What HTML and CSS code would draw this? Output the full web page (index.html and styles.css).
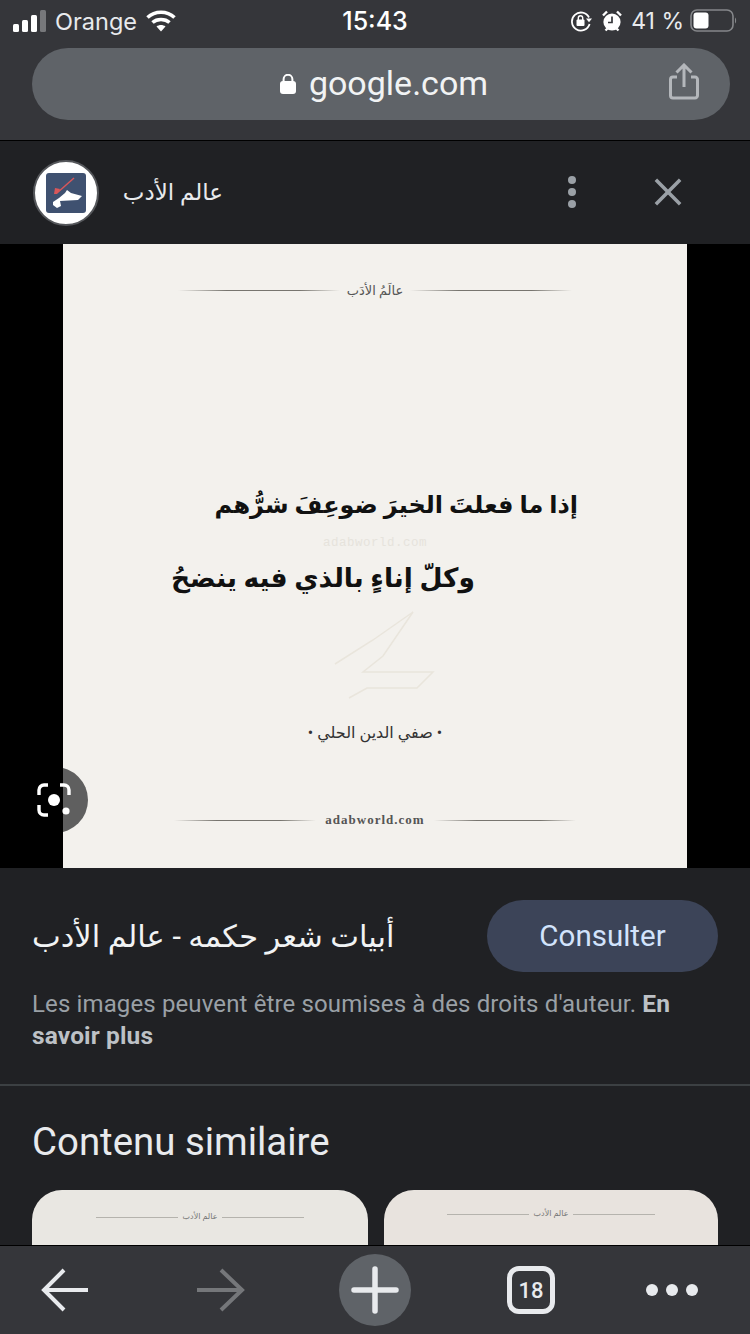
FILE: index.html
```html
<!DOCTYPE html>
<html lang="fr">
<head>
    <meta charset="UTF-8">
    <title>google.com</title>
    <link rel="stylesheet" href="styles.css">
</head>
<body>
<div class="phone">
    <!-- barre du haut -->
    <header class="top">
        <div class="status">
            <div class="status-left">
                <svg class="signal" width="36" height="22" viewBox="0 0 36 22">
                    <rect x="0" y="14" width="6" height="8" rx="1.5" fill="#fff"/>
                    <rect x="9" y="10" width="6" height="12" rx="1.5" fill="#fff"/>
                    <rect x="18" y="5" width="6" height="17" rx="1.5" fill="#fff"/>
                    <rect x="27" y="0" width="6" height="22" rx="1.5" fill="#77787b"/>
                </svg>
                <span class="carrier">Orange</span>
                <svg class="wifi" width="30" height="22" viewBox="0 0 30 22">
                    <path d="M1.5 7.5C9 0.5 21 0.5 28.5 7.5" fill="none" stroke="#fff" stroke-width="3.6"/>
                    <path d="M6.5 12.5C11 8.5 19 8.5 23.5 12.5" fill="none" stroke="#fff" stroke-width="3.6"/>
                    <path d="M10.5 16.5C13 14.5 17 14.5 19.5 16.5L15 21.5Z" fill="#fff"/>
                </svg>
            </div>
            <span class="clock">15:43</span>
            <div class="status-right">
                <svg width="22" height="22" viewBox="0 0 22 22">
                    <path d="M19 7.5A9 9 0 1 0 19.6 14" fill="none" stroke="#fff" stroke-width="1.8"/>
                    <path d="M16 8.5h6l-3 3.8z" fill="#fff"/>
                    <rect x="6.5" y="9.5" width="8" height="6.5" rx="1" fill="#fff"/>
                    <path d="M8.3 10V8a2.2 2.2 0 0 1 4.4 0v2" fill="none" stroke="#fff" stroke-width="1.4"/>
                </svg>
                <svg class="alarm" width="20" height="22" viewBox="0 0 20 22">
                    <circle cx="10" cy="12" r="8.6" fill="#fff"/>
                    <path d="M1 5.5L5 1.5M19 5.5L15 1.5M3.5 20.5l2-2M16.5 20.5l-2-2" stroke="#fff" stroke-width="2.4"/>
                    <path d="M10 6.5V12.5H6" fill="none" stroke="#35363a" stroke-width="1.7"/>
                </svg>
                <span class="battery-text">41 %</span>
                <svg class="battery" width="47" height="24" viewBox="0 0 47 24">
                    <rect x="1" y="1" width="42" height="21" rx="6" fill="none" stroke="#85878a" stroke-width="1.6"/>
                    <rect x="3.5" y="3.5" width="15" height="16" rx="3" fill="#fff"/>
                    <path d="M45 8.5c1.5.8 1.5 5.2 0 6z" fill="#85878a"/>
                </svg>
            </div>
        </div>
        <div class="urlbar">
            <div class="url">
                <svg width="16" height="20" viewBox="0 0 16 20">
                    <rect x="0" y="7" width="16" height="13" rx="3" fill="#fff"/>
                    <path d="M3.6 8V5.2a4.4 4.4 0 0 1 8.8 0V8" fill="none" stroke="#fff" stroke-width="2"/>
                </svg>
                <span>google.com</span>
            </div>
            <svg class="share" width="30" height="37" viewBox="0 0 30 37">
                <path d="M8 14H4a2.500 2.500 0 0 0-2.500 2.500v16A2.500 2.500 0 0 0 4 35h22a2.500 2.500 0 0 0 2.500-2.500v-16A2.500 2.500 0 0 0 26 14h-4" fill="none" stroke="#b4b7bb" stroke-width="3"/>
                <path d="M15 24V3M7.500 9.500L15 2l7.500 7.500" fill="none" stroke="#b4b7bb" stroke-width="3"/>
            </svg>
        </div>
    </header>

    <main class="content">
        <div class="source">
            <div class="logo">
                <svg width="40" height="40" viewBox="0 0 40 40">
                    <rect width="40" height="40" rx="3" fill="#3f5170"/>
                    <path d="M7 29L13 25 19 20 21 17 25 20 36 23 32 27 14 28 15 33 11 35 7 32z" fill="#fff"/>
                    <path d="M28 5L11 20" stroke="#d9575a" stroke-width="1.500"/>
                    <path d="M9 15l5 1-3 5H8z" fill="#d9575a"/>
                </svg>
            </div>
            <span class="source-name" dir="rtl">عالم الأدب</span>
            <svg class="kebab" width="10" height="34" viewBox="0 0 10 34">
                <circle cx="5" cy="5" r="4" fill="#9aa0a6"/>
                <circle cx="5" cy="17" r="4" fill="#9aa0a6"/>
                <circle cx="5" cy="29" r="4" fill="#9aa0a6"/>
            </svg>
            <svg class="close" width="30" height="30" viewBox="0 0 30 30">
                <path d="M2 2L28 28M28 2L2 28" stroke="#9aa0a6" stroke-width="3.800"/>
            </svg>
        </div>

        <div class="stage">
            <div class="paper">
                <div class="lens-bg"></div>
                <svg class="pen" width="110" height="90" viewBox="0 0 110 90">
                    <path d="M2 54L40 30 80 2 50 46 30 62 56 62 100 62 84 78H34L16 88" fill="none" stroke="#e9e5dc" stroke-width="1.500"/>
                </svg>
                <div class="rule-row head-row">
                    <i class="rule"></i>
                    <span class="rule-label" dir="rtl">عالَمُ الأدَب</span>
                    <i class="rule"></i>
                </div>
                <p class="verse verse-1" dir="rtl">إذا ما فعلتَ الخيرَ ضوعِفَ شرُّهم</p>
                <p class="mark">adabworld.com</p>
                <p class="verse verse-2" dir="rtl">وكلّ إناءٍ بالذي فيه ينضحُ</p>
                <p class="author" dir="rtl">• صفي الدين الحلي •</p>
                <div class="rule-row foot-row">
                    <i class="rule"></i>
                    <span class="rule-site">adabworld.com</span>
                    <i class="rule"></i>
                </div>
            </div>
            <svg class="lens" width="34" height="34" viewBox="0 0 34 34">
                <path d="M2 12V7a5 5 0 0 1 5-5h4M23 2h4a5 5 0 0 1 5 5v5M2 22v5a5 5 0 0 0 5 5h4" fill="none" stroke="#fff" stroke-width="3.400"/>
                <circle cx="17" cy="17" r="6" fill="#fff"/>
                <circle cx="29" cy="28" r="3.600" fill="#fff"/>
            </svg>
        </div>

        <section class="info">
            <div class="info-top">
                <h1 class="page-title" dir="rtl">أبيات شعر حكمه - عالم الأدب</h1>
                <a class="visit">Consulter</a>
            </div>
            <p class="rights">Les images peuvent être soumises à des droits d'auteur. <b>En</b> <b>savoir plus</b></p>
        </section>

        <section class="similar">
            <h2>Contenu similaire</h2>
            <div class="thumbs">
                <div class="thumb thumb-a">
                    <i></i><span dir="rtl">عالم الأدب</span><i></i>
                </div>
                <div class="thumb thumb-b">
                    <i></i><span dir="rtl">عالم الأدب</span><i></i>
                </div>
            </div>
        </section>
    </main>

    <!-- barre du bas -->
    <nav class="toolbar">
        <svg width="50" height="44" viewBox="0 0 50 44">
            <path d="M49 22H6M25 2L5 22l20 20" fill="none" stroke="#e8eaed" stroke-width="4"/>
        </svg>
        <svg class="forward" width="50" height="44" viewBox="0 0 50 44">
            <path d="M2 22h44M26 2l21 20-21 20" fill="none" stroke="#75777a" stroke-width="4"/>
        </svg>
        <div class="new-tab">
            <svg width="48" height="48" viewBox="0 0 48 48">
                <path d="M3 24h42M24 3v42" stroke="#e8eaed" stroke-width="5.500" stroke-linecap="round"/>
            </svg>
        </div>
        <div class="tabs">18</div>
        <svg class="more" width="52" height="12" viewBox="0 0 52 12">
            <circle cx="6" cy="6" r="6" fill="#e8eaed"/>
            <circle cx="26" cy="6" r="6" fill="#e8eaed"/>
            <circle cx="46" cy="6" r="6" fill="#e8eaed"/>
        </svg>
    </nav>
</div>
</body>
</html>
```

FILE: styles.css
```css
* {
    margin: 0;
    padding: 0;
    box-sizing: border-box;
}

html, body {
    width: 750px;
    height: 1334px;
    overflow: hidden;
    background: #202124;
}

body {
    font-family: Roboto, "DejaVu Sans", sans-serif;
}

svg {
    display: block;
    flex: none;
}

.phone {
    display: flex;
    flex-direction: column;
    width: 750px;
    height: 1334px;
}

/* barre du haut */
.top {
    flex: none;
    height: 141px;
    background: #35363a;
    border-bottom: 1px solid #000;
}

.status {
    display: grid;
    grid-template-columns: 1fr auto 1fr;
    align-items: center;
    height: 42px;
    padding: 0 13px;
    color: #fff;
    font-family: Inter, sans-serif;
    font-size: 25px;
}

.status-left {
    display: flex;
    align-items: center;
}

.carrier {
    margin-left: 6px;
    color: #e8eaed;
    font-size: 23.5px;
}

.wifi {
    margin-left: 9px;
}

.clock {
    font-weight: 500;
}

.status-right {
    display: flex;
    align-items: center;
    justify-content: flex-end;
}

.alarm {
    margin-left: 10px;
}

.battery-text {
    margin-left: 9px;
    color: #e8eaed;
    font-size: 23px;
}

.battery {
    margin-left: 6px;
}

.urlbar {
    display: flex;
    align-items: center;
    justify-content: center;
    position: relative;
    height: 72px;
    margin: 6px 20px 0 32px;
    border-radius: 36px;
    background: #5f6368;
}

.url {
    display: flex;
    align-items: center;
    gap: 13px;
    margin-left: 6px;
    color: #f1f3f4;
    font-size: 34px;
    line-height: 72px;
}

.url span {
    margin-top: -2px;
}

.share {
    position: absolute;
    right: 31px;
    top: 15px;
}

/* contenu */
.content {
    flex: 1;
    min-height: 0;
    overflow: hidden;
}

.source {
    display: flex;
    align-items: center;
    height: 103px;
    padding-left: 33px;
}

.logo {
    display: flex;
    align-items: center;
    justify-content: center;
    width: 66px;
    height: 66px;
    border: 2px solid #55575b;
    border-radius: 50%;
    background: #fff;
}

.source-name {
    width: 100px;
    margin-left: 24px;
    color: #e8eaed;
    font-size: 23px;
    white-space: nowrap;
}

.kebab {
    margin-left: 344px;
    margin-top: -2px;
}

.close {
    width: 28px;
    height: 28px;
    margin-left: 77px;
    margin-top: -2px;
}

.stage {
    position: relative;
    display: flex;
    justify-content: center;
    height: 624px;
    background: #000;
}

/* l'image du poème */
.paper {
    position: relative;
    width: 624px;
    height: 624px;
    overflow: hidden;
    background: #f3f1ed;
    color: #111;
}

.lens-bg {
    position: absolute;
    left: -41px;
    top: 523px;
    width: 66px;
    height: 66px;
    border-radius: 50%;
    background: #5f5f5f;
}

.lens {
    position: absolute;
    left: 37px;
    top: 539px;
}

.pen {
    position: absolute;
    left: 270px;
    top: 366px;
}

.rule-row {
    display: flex;
    align-items: center;
    justify-content: center;
    height: 20px;
}

.rule {
    display: block;
    height: 1px;
    background: linear-gradient(90deg, #f3f1ed, #77756f 30%, #77756f 75%, #f3f1ed);
}

.head-row {
    margin-top: 36px;
    gap: 7px;
}

.head-row .rule {
    width: 162px;
}

.rule-label {
    color: #555;
    font-size: 13px;
    white-space: nowrap;
}

.verse {
    height: 40px;
    line-height: 40px;
    font-weight: 700;
    white-space: nowrap;
}

.verse-1 {
    margin-top: 185px;
    padding-right: 109px;
    font-size: 24px;
}

.verse-2 {
    margin-top: 7px;
    padding-right: 212px;
    font-size: 26.5px;
}

.mark {
    height: 16px;
    margin-top: 10px;
    color: #e6e3dc;
    font-family: "Liberation Mono", monospace;
    font-size: 12.5px;
    line-height: 16px;
    letter-spacing: 0.5px;
    text-align: center;
}

.author {
    height: 24px;
    margin-top: 123px;
    color: #333;
    font-size: 16px;
    line-height: 24px;
    text-align: center;
}

.foot-row {
    margin-top: 65px;
    gap: 9px;
}

.foot-row .rule {
    width: 142px;
}

.rule-site {
    color: #555;
    font-family: "Liberation Serif", serif;
    font-size: 13px;
    font-weight: 700;
    letter-spacing: 1px;
}

/* infos */
.info {
    height: 218px;
    padding: 32px 32px 0;
    border-bottom: 2px solid #3c4043;
}

.info-top {
    display: flex;
    align-items: center;
    justify-content: space-between;
}

.page-title {
    color: #f1f3f4;
    font-size: 30.5px;
    font-weight: 400;
    white-space: nowrap;
}

.visit {
    display: flex;
    align-items: center;
    justify-content: center;
    width: 231px;
    height: 72px;
    border-radius: 36px;
    background: #3c4458;
    color: #d2e3fc;
    font-size: 29.5px;
}

.rights {
    margin-top: 16px;
    color: #9aa0a6;
    font-size: 24px;
    line-height: 32px;
    letter-spacing: 0.13px;
}

.rights b {
    color: #bdc1c6;
    font-size: 24.5px;
    font-weight: 700;
}

.similar {
    padding: 36px 32px 0;
}

.similar h2 {
    color: #e8eaed;
    font-size: 38.4px;
    font-weight: 400;
    line-height: 40px;
}

.thumbs {
    display: flex;
    gap: 16px;
    margin-top: 28px;
}

.thumb {
    display: flex;
    justify-content: center;
    gap: 5px;
    height: 80px;
    border-radius: 30px 30px 0 0;
    color: #777;
    font-size: 8px;
    line-height: 12px;
}

.thumb i {
    display: block;
    width: 82px;
    height: 1px;
    margin-top: 6px;
    background: #b5b3ad;
}

.thumb-a {
    width: 336px;
    padding-top: 21px;
    background: #e9e7e2;
}

.thumb-b {
    width: 334px;
    padding-top: 18px;
    background: #e8e3de;
}

/* barre du bas */
.toolbar {
    flex: none;
    display: flex;
    align-items: center;
    height: 89px;
    padding-left: 39px;
    background: #35363a;
    border-top: 1px solid #000;
}

.forward {
    margin-left: 106px;
}

.new-tab {
    display: flex;
    align-items: center;
    justify-content: center;
    width: 72px;
    height: 72px;
    margin-left: 94px;
    border-radius: 50%;
    background: #5f6368;
}

.tabs {
    display: flex;
    align-items: center;
    justify-content: center;
    width: 48px;
    height: 48px;
    margin-left: 96px;
    border: 5px solid #e8eaed;
    border-radius: 12px;
    color: #e8eaed;
    font-size: 22px;
    font-weight: 500;
}

.more {
    margin-left: 91px;
}
```
